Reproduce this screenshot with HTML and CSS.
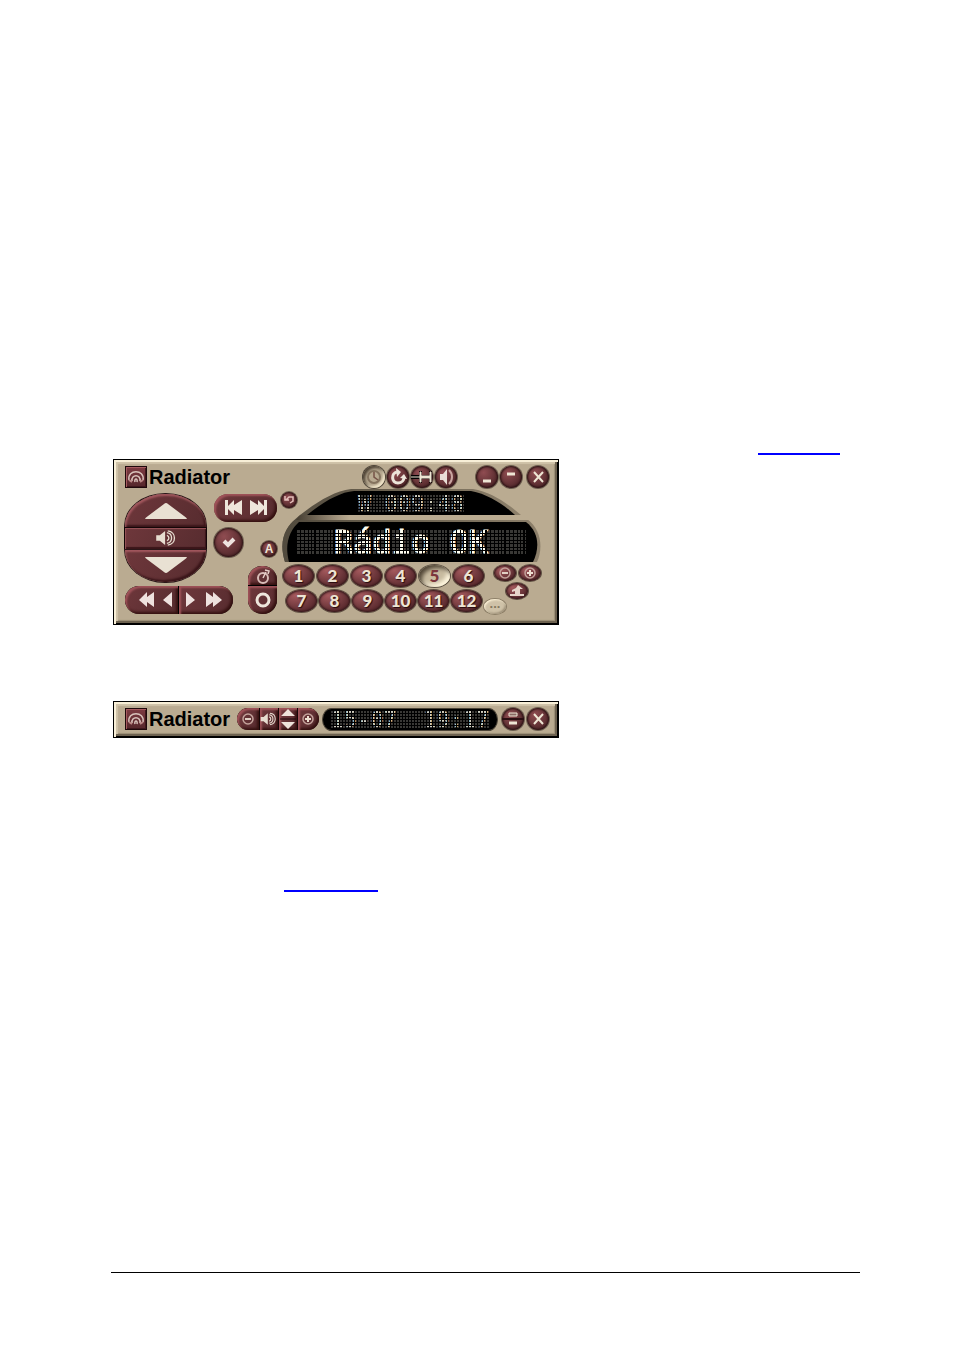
FILE: index.html
```
<!DOCTYPE html>
<html lang="en">

<head>
    <meta charset="UTF-8">
    <meta name="viewport" content="width=device-width, initial-scale=1.0">
    <title>Radiator</title>
    <link rel="stylesheet" href="styles.css">
</head>

<body>
    <!-- shared icons -->
    <svg class="sprite" aria-hidden="true">
        <symbol id="logo" viewBox="0 0 22 22">
            <path d="M4 14C2 3 20 3 18 14M7 15C6 8 16 8 15 15M10 16C9 12 13 12 12 16" fill="none" stroke="#d9c3bb" stroke-width="1.5" />
            <path d="M4 14l3 2M18 14l-3 2" fill="none" stroke="#b98583" stroke-width="2" />
        </symbol>
        <symbol id="speaker" viewBox="0 0 24 18">
            <path d="M1 6h4l6-5v16l-6-5H1z" fill="#e7ddd0" />
            <path d="M13 6c3 1 3 5 0 6M13 3c7 1 7 11 0 12M14 1c10 1 10 15 0 16" fill="none" stroke="#e7ddd0" stroke-width="1.5" />
        </symbol>
        <symbol id="close" viewBox="0 0 22 22">
            <path d="M7 6l9 10M16 6L7 16" stroke="#eee5d4" stroke-width="2" />
        </symbol>
        <symbol id="minus" viewBox="0 0 18 18">
            <circle cx="9" cy="9" r="5" fill="none" stroke="#c3a29b" stroke-width="1.5" />
            <path d="M6 9h6" stroke="#e0cfc4" stroke-width="2" />
        </symbol>
        <symbol id="plus" viewBox="0 0 18 18">
            <circle cx="9" cy="9" r="5" fill="none" stroke="#c3a29b" stroke-width="1.5" />
            <path d="M6 9h6M9 6v6" stroke="#eee0d2" stroke-width="2" />
        </symbol>
    </svg>

    <main>
        <div class="line line-right"><a href="#radio" class="link" aria-label="Radio"></a></div>

        <section class="device" id="radio">
            <header class="titlebar">
                <span class="logo"><svg width="22" height="22"><use href="#logo" /></svg></span>
                <h1>Radiator</h1>
                <div class="tools">
                    <button class="round pale" aria-label="Clock"><svg viewBox="0 0 22 22"><circle cx="11" cy="11" r="6" fill="#b8aa91" stroke="#85745f" stroke-width="2" /><path d="M11 6v5l4 3" fill="none" stroke="#765347" stroke-width="1.5" /></svg></button>
                    <button class="round" aria-label="Refresh"><svg viewBox="0 0 22 22"><path d="M10 6C4 7 4 17 11 17c4 0 6-3 6-6" fill="none" stroke="#ece5da" stroke-width="3" /><path d="M9 2l5 4-4 5zM13 12l4-4 3 5z" fill="#ece5da" /></svg></button>
                    <button class="round" aria-label="Pin"><svg viewBox="0 0 22 22"><path d="M0 11h9" stroke="#000" stroke-width="4" /><path d="M8 5h3v4h7V5h3v12h-3v-4h-7v4H8z" fill="#170708" /><path d="M0 11h9" stroke="#eee5d4" /><path d="M9 6h1v4h9V6h1v10h-1v-4h-9v4H9z" fill="#eee5d4" stroke="#eee5d4" /></svg></button>
                    <button class="round" aria-label="Sound"><svg viewBox="0 0 22 22"><path d="M5 8h3l4-5v16l-4-5H5z" fill="#e9dfd7" /><path d="M14 4c4 4 4 10 0 14" fill="none" stroke="#c9a5a1" stroke-width="2" /></svg></button>
                </div>
                <div class="window-buttons">
                    <button class="round" aria-label="Minimize"><svg viewBox="0 0 22 22"><path d="M7 15h8" stroke="#eee5d4" stroke-width="3" /></svg></button>
                    <button class="round" aria-label="Small view"><svg viewBox="0 0 22 22"><path d="M7 8h8" stroke="#eee5d4" stroke-width="3" /></svg></button>
                    <button class="round close" aria-label="Close"><svg><use href="#close" /></svg></button>
                </div>
            </header>

            <div class="panel">
                <div class="controls">
                    <div class="dial">
                        <button aria-label="Volume up"><svg width="42" height="18"><path d="M0 17q0-1 3-3L19 2q2-2 4 0l16 12q3 2 3 3z" fill="#e9e1d3" /></svg></button>
                        <button class="mute" aria-label="Mute"><svg width="24" height="16"><use href="#speaker" /></svg></button>
                        <button aria-label="Volume down"><svg width="42" height="18"><path d="M0 1h42q0 1-3 3L23 16q-2 2-4 0L3 4Q0 2 0 1z" fill="#e9e1d3" /></svg></button>
                    </div>
                    <div class="middle">
                        <button class="pill skip" aria-label="Skip"><svg width="44" height="16"><path d="M1 0h3v6l6-6v5l8-5v15l-8-5v5l-6-6v6H1zM43 0h-3v6l-6-6v5l-8-5v15l8-5v5l6-6v6h3z" fill="#eee6db" /></svg></button>
                        <div class="middle-row">
                            <button class="round check" aria-label="Confirm"><svg viewBox="0 0 29 29"><path d="M10 13l4 4 6-6" fill="none" stroke="#eee3df" stroke-width="4" /></svg></button>
                            <button class="round mini">A</button>
                        </div>
                    </div>
                    <div class="seek">
                        <button aria-label="Rewind"><svg width="34" height="16"><path d="M8 0v5l7-5v15l-7-5v5L0 8zM33 0v15l-9-7z" fill="#eee1de" /></svg></button>
                        <button aria-label="Forward"><svg width="38" height="16"><path d="M2 0v15l9-7zM22 0v15l7-5v5l9-7-9-8v5z" fill="#eee1de" /></svg></button>
                    </div>
                    <div class="power">
                        <button aria-label="Timer"><svg width="18" height="18"><circle cx="9" cy="11" r="5" fill="none" stroke="#d9bdb8" stroke-width="2" /><path d="M9 11l3-6M11 3l4 1-1 3" fill="none" stroke="#e6cec8" stroke-width="1.5" /></svg></button>
                        <button aria-label="Record"><svg width="18" height="18"><circle cx="9" cy="9" r="6" fill="none" stroke="#eee6dc" stroke-width="3" /></svg></button>
                    </div>
                </div>

                <div class="right">
                    <div class="lcd">
                        <svg class="lcd-frame" viewBox="0 0 260 74" preserveAspectRatio="none">
                            <defs>
                                <linearGradient id="rim">
                                    <stop offset="0" stop-color="#514a3d" />
                                    <stop offset=".5" stop-color="#6e6452" />
                                    <stop offset="1" stop-color="#8d806b" />
                                </linearGradient>
                                <linearGradient id="strip">
                                    <stop offset="0" stop-color="#443c30" />
                                    <stop offset=".18" stop-color="#a3957f" />
                                    <stop offset=".23" stop-color="#baab91" />
                                    <stop offset="1" stop-color="#baab91" />
                                </linearGradient>
                            </defs>
                            <path d="M4 73C-3 51 5 37 19 26C36 13 53 2 70 0H192C210 3 226 14 240 26H19z" fill="url(#rim)" />
                            <path d="M4 73C-3 51 5 37 15 30H246C261 41 262 60 256 73z" fill="url(#rim)" />
                            <path d="M26 26C42 13 59 3 73 2H190C207 5 223 16 234 26z" />
                            <path d="M19 26H248V31H15z" fill="url(#strip)" />
                            <path d="M8 73C3 54 9 41 18 33H245C258 43 259 59 252 73z" />
                        </svg>
                        <button class="round mini undo" aria-label="Undo"><svg viewBox="0 0 16 16"><path d="M4 4v4h4M5 8l3-3h4v4l-3 2" fill="none" stroke="#e4bfba" stroke-width="1.5" /></svg></button>
                        <output class="led led-small">W 009:48</output>
                        <output class="led led-big">Rádio OK</output>
                    </div>

                    <div class="keys">
                        <div class="presets">
                            <div class="preset-row">
                                <button>1</button><button>2</button><button>3</button><button>4</button><button class="active">5</button><button>6</button>
                            </div>
                            <div class="preset-row second">
                                <button>7</button><button>8</button><button>9</button><button>10</button><button>11</button><button>12</button>
                            </div>
                        </div>
                        <div class="extra">
                            <button class="oval" aria-label="Less"><svg width="18" height="18"><use href="#minus" /></svg></button>
                            <button class="oval" aria-label="More"><svg width="18" height="18"><use href="#plus" /></svg></button>
                            <button class="oval home" aria-label="Home"><svg width="18" height="16"><path d="M10 2l5 4h-3v5h4v2H2v-2h5V8L4 9V7l4-2z" fill="#e6d5ca" /></svg></button>
                            <button class="oval options">...</button>
                        </div>
                    </div>
                </div>
            </div>
        </section>

        <section class="device compact">
            <header class="titlebar">
                <span class="logo"><svg width="22" height="22"><use href="#logo" /></svg></span>
                <h2>Radiator</h2>
                <div class="strip">
                    <button aria-label="Less"><svg width="18" height="18"><use href="#minus" /></svg></button>
                    <button class="narrow" aria-label="Mute"><svg width="17" height="14"><use href="#speaker" /></svg></button>
                    <button class="narrow" aria-label="Volume"><svg width="16" height="20"><path d="M1 7l7-7 7 7z M1 13h14l-7 7z" fill="#eee3da" /><path d="M0 10h16" stroke="#1d080a" /></svg></button>
                    <button aria-label="More"><svg width="18" height="18"><use href="#plus" /></svg></button>
                </div>
                <div class="display"><output class="led led-small">15-07  19:17</output></div>
                <button class="round" aria-label="Full view"><svg viewBox="0 0 22 22"><path d="M0 11h22" stroke="#2b0f12" stroke-width="2" /><path d="M7 5h8v3H7z" fill="#8a6a64" stroke="#eee5d4" /><path d="M7 15h8" stroke="#eee5d4" stroke-width="3" /></svg></button>
                <button class="round close" aria-label="Close"><svg><use href="#close" /></svg></button>
            </header>
        </section>

        <div class="line line-inner"><a href="#radio" class="link wide" aria-label="Radio"></a></div>
        <hr>
    </main>
</body>

</html>
```
FILE: styles.css
```
* {
    box-sizing: border-box;
}

body {
    margin: 0;
    background-color: white;
    font-family: "Liberation Sans", Arial, sans-serif;
}

main {
    padding: 435px 94px 77px 111px;
}

button {
    display: flex;
    align-items: center;
    justify-content: center;
    margin: 0;
    padding: 0;
    border: none;
    color: #eee5d4;
    cursor: pointer;
}

.sprite {
    position: absolute;
    width: 0;
    height: 0;
}

.line {
    display: flex;
    height: 20px;
}

.line-right {
    justify-content: flex-end;
    padding-right: 20px;
}

.line-inner {
    margin-top: 134px;
    padding-left: 173px;
}

.link {
    width: 82px;
    border-bottom: 2px solid #0000ff;
}

.link.wide {
    width: 94px;
}

hr {
    margin: 380px 0 0;
    border: none;
    border-top: 1px solid black;
}

/* device body */
.device {
    width: 446px;
    margin: 4px 0 0 2px;
    padding: 6px 9px 10px 11px;
    border: 1px solid black;
    background-color: #baab91;
    box-shadow: inset 2px 2px 0 #f8efd7, inset -1px -1px 0 #000, inset -3px -3px 0 #6d6250,
        inset 4px 4px 1px #d0c3a9, inset -4px -4px 1px #9b8d76;
}

.device.compact {
    margin-top: 76px;
    padding: 6px 8px 7px 11px;
}

.titlebar {
    display: flex;
    align-items: center;
    height: 22px;
}

.titlebar h1,
.titlebar h2 {
    margin: 0 0 0 2px;
    font-size: 20px;
    line-height: 22px;
    color: black;
}

.logo {
    display: flex;
    flex: none;
    width: 22px;
    height: 22px;
    border: 1px solid #1e090b;
    background: linear-gradient(#7d3b41, #55272b);
    box-shadow: inset 1px 1px 0 #a65a5f, inset -1px -1px 0 #3e171b;
}

.logo svg {
    margin: -1px;
}

.tools,
.window-buttons {
    display: flex;
    gap: 2px;
}

.tools {
    margin-left: auto;
}

.window-buttons {
    margin-left: 19px;
}

.round {
    flex: none;
    width: 22px;
    height: 22px;
    border-radius: 50%;
    background: radial-gradient(circle at 35% 30%, #8f4c51, #5f3033 60%, #3b1a1d);
    box-shadow: 0 0 0 1px #6a5d4e, inset 0 0 2px 1px #2b1213;
}

.round svg {
    width: 100%;
    height: 100%;
}

.round.pale {
    background: #b4a68e;
    box-shadow: 0 0 0 1px #4d4438, inset 2px 2px 3px #4c4133, inset -2px -2px 2px #eee3c7;
}

.close {
    margin-left: 3px;
}

.panel {
    display: flex;
    gap: 4px;
    margin-top: 1px;
}

/* left side */
.controls {
    display: grid;
    grid-template-columns: 81px 8px 19px 15px 29px;
    grid-template-rows: 64px 8px 16px 4px 28px;
    padding-top: 5px;
}

.dial {
    grid-column: 1;
    grid-row: 1 / 4;
    display: flex;
    flex-direction: column;
    gap: 1px;
}

.dial button {
    flex: 1;
    background: linear-gradient(120deg, #6e373b, #572c2f);
    box-shadow: 0 0 0 1px #2b1719, inset 1px 2px 2px #a3585e, inset -2px -2px 2px #3a1519;
}

.dial button:first-child {
    padding-top: 2px;
    border-radius: 40px 40px 0 0 / 32px 32px 0 0;
}

.dial button:last-child {
    padding-bottom: 2px;
    border-radius: 0 0 40px 40px / 0 0 32px 32px;
}

.dial .mute {
    flex: none;
    height: 21px;
    box-shadow: 0 0 0 1px #140607, inset 1px 1px 1px #99555a, inset -1px -2px 1px #3a1519;
}

.middle {
    grid-column: 3 / 6;
    grid-row: 1;
    display: flex;
    flex-direction: column;
    gap: 6px;
}

.middle-row {
    display: flex;
    align-items: flex-end;
    justify-content: space-between;
}

.pill {
    height: 28px;
    border-radius: 14px;
}

.pill,
.seek button,
.power button,
.strip button {
    background: linear-gradient(120deg, #6e373b, #572c2f);
    box-shadow: inset 2px 2px 2px #a05359, inset -2px -2px 3px #34100f;
}

.round.check {
    width: 29px;
    height: 29px;
}

.round.mini {
    width: 16px;
    height: 16px;
    font: bold 12px/16px "Liberation Sans", Arial, sans-serif;
}

.seek {
    grid-column: 1 / 4;
    grid-row: 5;
    display: grid;
    grid-template-columns: 53px 1fr;
    gap: 1px;
    overflow: hidden;
    border-radius: 14px;
    background-color: black;
}

.seek button:first-child {
    border-radius: 14px 0 0 14px;
    padding-left: 8px;
}

.seek button:last-child {
    border-radius: 0 14px 14px 0;
    padding-right: 6px;
}

.power {
    grid-column: 5;
    grid-row: 3 / 6;
    display: flex;
    flex-direction: column;
    gap: 1px;
    overflow: hidden;
    border-radius: 14px;
    background-color: black;
}

.power button:first-child {
    height: 19px;
    border-radius: 14px 14px 0 0;
}

.power button:last-child {
    flex: 1;
    border-radius: 0 0 14px 14px;
}

/* display */
.lcd {
    position: relative;
    display: flex;
    flex-direction: column;
    align-items: center;
    width: 260px;
    height: 74px;
    padding-top: 6px;
}

.lcd-frame {
    position: absolute;
    top: 0;
    left: 0;
    width: 100%;
    height: 100%;
}

.undo {
    position: absolute;
    top: 3px;
    left: 0;
}

.led {
    position: relative;
    font-family: "DejaVu Sans Mono", monospace;
    text-align: center;
    white-space: pre;
    background-color: #393835;
}

/* black lines over the glyphs split them into dots */
.led::after {
    content: "";
    position: absolute;
    top: 0;
    right: 0;
    bottom: 0;
    left: 0;
}

.led-small {
    font-size: 22px;
    line-height: 17px;
    height: 17px;
    color: #d0cdc0;
}

.led-small::after {
    background: repeating-linear-gradient(90deg, transparent 0 2px, #000 2px 3px),
        repeating-linear-gradient(transparent 0 2px, #000 2px 3px);
}

.led-big {
    width: 229px;
    height: 25px;
    margin-top: 18px;
    font-size: 32px;
    line-height: 25px;
    color: #fffdf0;
    -webkit-text-stroke: 1px #fffdf0;
}

.led-big::after {
    background: repeating-linear-gradient(90deg, transparent 0 3px, #000 3px 4px, transparent 4px 7px, #000 7px 8px, transparent 8px 11px, #000 11px 12px, transparent 12px 14px, #000 14px 15px, transparent 15px 17px, #000 17px 19px),
        repeating-linear-gradient(transparent 0 3px, #000 3px 4px, transparent 4px 6px, #000 6px 7px);
}

/* number keys */
.keys {
    display: flex;
    justify-content: space-between;
    margin-top: 2px;
    padding-left: 2px;
}

.preset-row {
    display: flex;
    gap: 3px;
}

.preset-row.second {
    gap: 2px;
    margin: 3px 0 0 3px;
}

.preset-row button,
.oval {
    border-radius: 50%;
    background: radial-gradient(ellipse at 30% 25%, #a4595d, #673337 60%, #42191c);
    box-shadow: 0 0 0 1px #5c4e40, inset 0 0 2px 1px #34181a;
}

.preset-row button {
    width: 31px;
    height: 22px;
    font: 900 17px/20px Lato, sans-serif;
    text-shadow: 1px 1px 1px #260b0e;
}

.preset-row .active {
    color: #7b353c;
    text-shadow: none;
    background: #c8bba0;
    box-shadow: 0 0 0 1px #5c5142, inset 3px 3px 4px #514636, inset -3px -3px 4px #fff7df;
}

.extra {
    display: flex;
    flex-wrap: wrap;
    align-content: flex-start;
    gap: 0 3px;
    width: 58px;
    padding-left: 10px;
    margin-right: 2px;
}

.oval {
    width: 22px;
    height: 16px;
}

.home {
    margin: 2px 12px 0;
}

.options {
    height: 15px;
    margin-left: -10px;
    font: bold 13px/8px "Liberation Sans", Arial, sans-serif;
    color: #857860;
    padding-bottom: 6px;
    background: #cfc2a8;
    box-shadow: 0 0 0 1px #8d7f68, inset 1px 1px 2px #fff4d9, inset -1px -1px 2px #988a72;
}

/* compact bar */
.strip {
    display: flex;
    gap: 1px;
    width: 82px;
    height: 22px;
    margin-left: 7px;
    overflow: hidden;
    border-radius: 11px;
    background-color: #160607;
}

.strip button {
    flex: 1;
}

.strip .narrow {
    flex: none;
    width: 18px;
}

.strip button:first-child {
    border-radius: 11px 0 0 11px;
}

.strip button:last-child {
    border-radius: 0 11px 11px 0;
}

.display {
    flex: none;
    display: flex;
    align-items: center;
    justify-content: center;
    width: 176px;
    height: 23px;
    margin: 0 4px 0 3px;
    border: 1px solid #4c4437;
    border-radius: 10px / 12px;
    background-color: black;
}
```
